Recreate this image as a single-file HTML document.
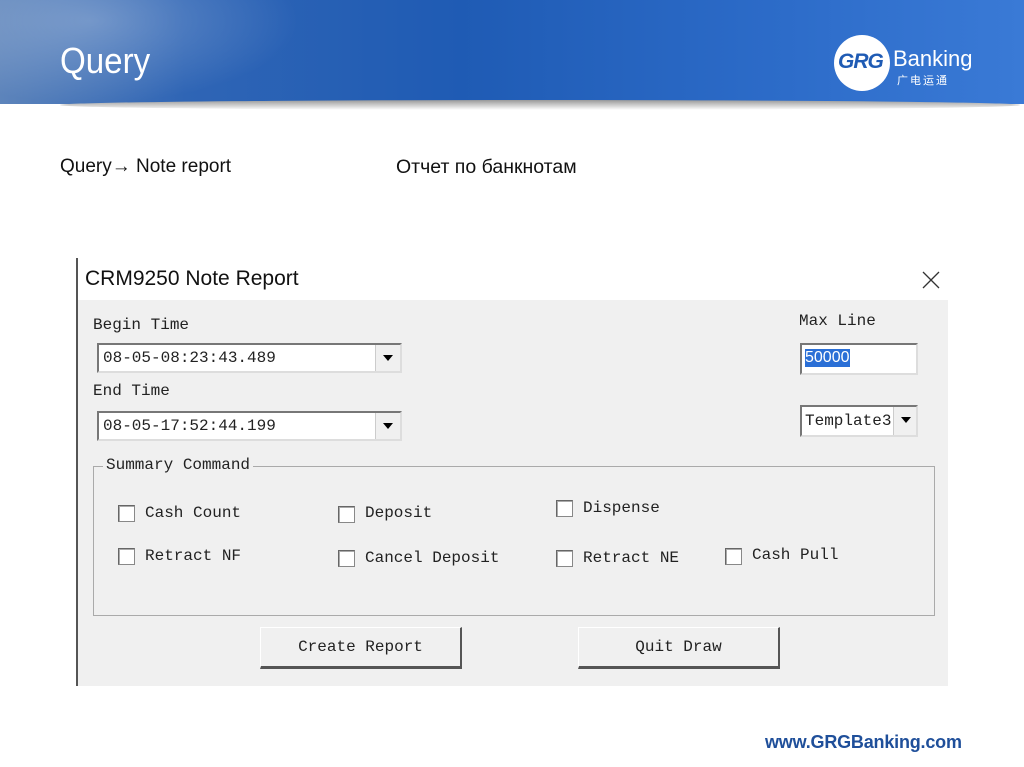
<!DOCTYPE html>
<html><head><meta charset="utf-8"><style>
body{margin:0;width:1024px;height:767px;background:#fff;position:relative;overflow:hidden;font-family:"Liberation Sans",sans-serif}
.a{position:absolute}
.m{font-family:"Liberation Mono","Noto Serif CJK SC",monospace;font-size:16px;color:#222}
.cb{position:absolute;width:15px;height:15px;background:#fff;border:1px solid #888;border-top-color:#666;border-left-color:#666;box-shadow:inset 1px 1px 0 #aaa}
.btn{position:absolute;background:#f0f0f0;border:1px solid #fff;border-right:2px solid #555;border-bottom:3px solid #555;text-align:center;line-height:38px}
.dd{position:absolute;background:#fff;border:2px solid #777;border-right-color:#ddd;border-bottom-color:#ddd}
.arr{position:absolute;right:0;top:0;bottom:0;width:24px;background:#f0f0f0;border-left:1px solid #ccc}
.arr:after{content:"";position:absolute;left:7px;top:10px;border-left:5px solid transparent;border-right:5px solid transparent;border-top:6px solid #000}
</style></head><body>
<div class="a" style="left:0;top:0;width:1024px;height:104px;background:linear-gradient(90deg,#5d84bb 0%,#2f65b5 18%,#1f5bb4 45%,#2c6bc8 75%,#3a7ad6 100%)"></div>
<div class="a" style="left:0;top:0;width:300px;height:104px;background:radial-gradient(ellipse at 30% 20%,rgba(255,255,255,.25),rgba(255,255,255,0) 70%)"></div>
<div class="a" style="left:60px;top:100px;width:960px;height:10px;background:linear-gradient(#999,#fff);border-radius:50%"></div>
<div class="a" style="left:60px;top:40px;color:#fff;font-size:36px;transform:scaleX(.92);transform-origin:left">Query</div>
<div class="a" style="left:834px;top:35px;width:56px;height:56px;border-radius:50%;background:#fff"></div>
<div class="a" style="left:838px;top:50px;color:#1f5bb4;font-size:21px;font-style:italic;font-weight:bold;letter-spacing:-1px">GRG</div>
<div class="a" style="left:893px;top:46px;color:#fff;font-size:22px">Banking</div>
<div class="a" style="left:897px;top:72px;color:#fff;font-size:11px;font-family:'Noto Sans CJK SC',sans-serif;letter-spacing:2px">广电运通</div>
<div class="a" style="left:60px;top:156px;font-size:19px;color:#111">Query→ Note report</div>
<div class="a" style="left:396px;top:156px;font-size:19.5px;color:#111">Отчет по банкнотам</div>
<div class="a" style="left:76px;top:258px;width:2px;height:428px;background:#555"></div>
<div class="a" style="left:78px;top:260px;width:870px;height:426px;background:#f0f0f0"></div>
<div class="a" style="left:78px;top:260px;width:870px;height:40px;background:#fff"></div>
<div class="a" style="left:85px;top:267px;font-size:21px;color:#111">CRM9250 Note Report</div>
<svg class="a" style="left:922px;top:271px" width="18" height="18"><path d="M1 1L17 17M17 1L1 17" stroke="#333" stroke-width="1.3"/></svg>
<div class="a m" style="left:93px;top:316px">Begin Time</div>
<div class="dd" style="left:97px;top:343px;width:301px;height:26px"><span class="a m" style="left:4px;top:4px">08-05-08:23:43.489</span><div class="arr"></div></div>
<div class="a m" style="left:93px;top:382px">End Time</div>
<div class="dd" style="left:97px;top:411px;width:301px;height:26px"><span class="a m" style="left:4px;top:4px">08-05-17:52:44.199</span><div class="arr"></div></div>
<div class="a m" style="left:799px;top:312px">Max Line</div>
<div class="dd" style="left:800px;top:343px;width:114px;height:28px"><span class="a" style="left:3px;top:4px;font-size:16px;background:#2a6fd6;color:#fff">50000</span></div>
<div class="dd" style="left:800px;top:405px;width:114px;height:28px;background:#fff;overflow:hidden"><span class="a m" style="left:3px;top:5px">Template3</span><div class="arr" style="width:22px"></div></div>
<div class="a" style="left:93px;top:466px;width:840px;height:148px;border:1px solid #aaa"></div>
<div class="a m" style="left:103px;top:456px;background:#f0f0f0;padding:0 3px">Summary Command</div>
<div class="cb" style="left:118px;top:505px"></div><div class="a m" style="left:145px;top:504px">Cash Count</div>
<div class="cb" style="left:338px;top:506px"></div><div class="a m" style="left:365px;top:504px">Deposit</div>
<div class="cb" style="left:556px;top:500px"></div><div class="a m" style="left:583px;top:499px">Dispense</div>
<div class="cb" style="left:118px;top:548px"></div><div class="a m" style="left:145px;top:547px">Retract NF</div>
<div class="cb" style="left:338px;top:550px"></div><div class="a m" style="left:365px;top:549px">Cancel Deposit</div>
<div class="cb" style="left:556px;top:550px"></div><div class="a m" style="left:583px;top:549px">Retract NE</div>
<div class="cb" style="left:725px;top:548px"></div><div class="a m" style="left:752px;top:546px">Cash Pull</div>
<div class="btn m" style="left:260px;top:627px;width:199px;height:38px">Create Report</div>
<div class="btn m" style="left:578px;top:627px;width:199px;height:38px">Quit Draw</div>
<div class="a" style="left:765px;top:732px;font-size:18px;font-weight:bold;color:#1f4f9a;letter-spacing:-0.2px">www.GRGBanking.com</div>
</body></html>
